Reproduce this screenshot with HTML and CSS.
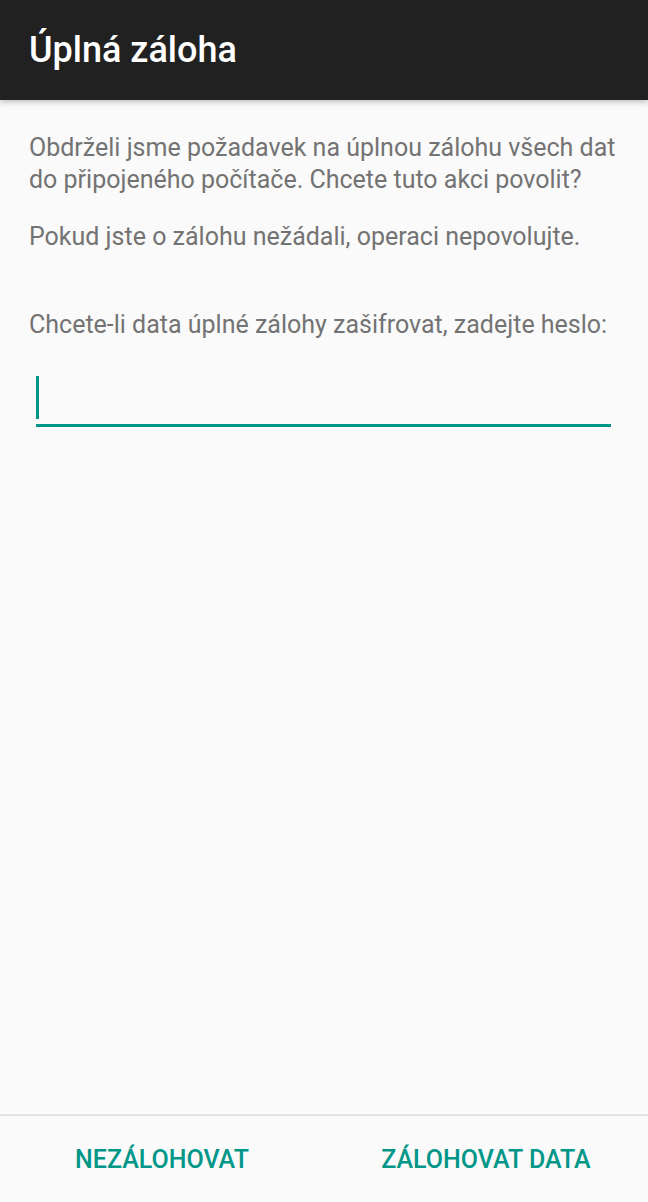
FILE: index.html
```html
<!DOCTYPE html>
<html lang="cs">
<head>
<meta charset="utf-8">
<link rel="stylesheet" href="styles.css">
</head>
<body>
<div class="app">
  <header class="toolbar"><h1 class="title">Úplná záloha</h1></header>
  <main class="content">
    <p class="msg">Obdrželi jsme požadavek na úplnou zálohu všech dat do připojeného počítače. Chcete tuto akci povolit?</p>
    <p class="msg msg-2">Pokud jste o zálohu nežádali, operaci nepovolujte.</p>
    <p class="msg msg-3">Chcete-li data úplné zálohy zašifrovat, zadejte heslo:</p>
    <div class="field"><span class="cursor"></span></div>
  </main>
  <footer class="actions">
    <button class="btn">NEZÁLOHOVAT</button>
    <button class="btn">ZÁLOHOVAT DATA</button>
  </footer>
</div>
</body>
</html>
```
FILE: styles.css
```css
html, body { margin: 0; padding: 0; }
body { background: #fafafa; font-family: Roboto, "Noto Sans", sans-serif; }
.app { width: 648px; height: 1202px; display: flex; flex-direction: column; }
.toolbar { height: 100px; background: #212121; display: flex; align-items: center; padding-left: 29px; box-shadow: 0 2px 6px rgba(0,0,0,0.25); position: relative; z-index: 1; flex: none; }
.title { margin: 0; color: #fff; font-size: 36px; font-weight: 500; }
.content { flex: 1; padding: 32px 29px 0 29px; }
.msg { margin: 0; color: #737373; font-size: 25px; line-height: 32px; }
.msg-2 { margin-top: 25px; }
.msg-3 { margin-top: 56px; }
.field { margin: 18px 8px 0 7px; height: 65px; border-bottom: 3px solid #009688; position: relative; }
.cursor { position: absolute; left: 0; top: 17px; width: 3px; height: 43px; background: #009688; }
.actions { height: 86px; border-top: 2px solid #e3e3e3; display: flex; align-items: center; flex: none; }
.btn { flex: 1; background: none; border: 0; color: #009688; font-family: Roboto, sans-serif; font-weight: 500; font-size: 25px; padding: 0; }
```
